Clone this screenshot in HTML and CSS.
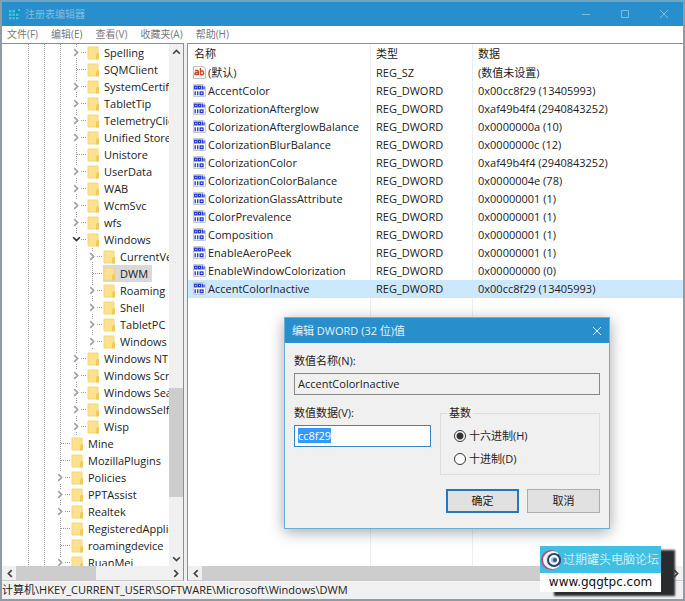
FILE: index.html
```html
<!DOCTYPE html>
<html lang="zh-CN">
<head>
  <meta charset="UTF-8" />
  <meta name="viewport" content="width=device-width, initial-scale=1" />
  <title>注册表编辑器</title>
  <link rel="stylesheet" href="styles.css">
</head>
<body>
  <svg class="defs" aria-hidden="true">
    <symbol id="folder" viewBox="0 0 12 14">
      <path d="M1 1h10v12H1z" fill="#fde28c" stroke="#f3d67c"/>
      <path d="M10 7h2v6.500h-3V9z" fill="#f0cb5c"/>
    </symbol>
    <symbol id="arrow" viewBox="0 0 8 8">
      <path d="M2 1l3 3-3 3" fill="none" stroke="currentColor" stroke-width="1.500"/>
    </symbol>
    <symbol id="dword" viewBox="0 0 13 13">
      <path d="M.5 .5h9.500l2.500 2v10H.5z" fill="#f6f8fc" stroke="#c3c9d4"/>
      <g fill="none" stroke="#2338cf" stroke-width="1.300">
        <rect x="1.700" y="2.200" width="2.300" height="2.600"/>
        <rect x="5.500" y="2.200" width="2" height="2.600"/>
        <path d="M9.300 1.500v4M11 2.500v3M2.200 7.300v4M4.700 7.300v4"/>
        <rect x="7.200" y="8" width="2.800" height="2.600"/>
      </g>
    </symbol>
    <symbol id="string" viewBox="0 0 13 13">
      <path d="M.5 .5h9.500l2.500 2v10H.5z" fill="#fdf7f4" stroke="#c5c1bf"/>
      <g fill="none" stroke="#d4472a" stroke-width="1.400">
        <path d="M2 4.500h2.500L5.300 5.300V9M5.300 6.500H3L2 7.400V8.500h3.300"/>
        <path d="M7.500 2v7M7.500 5h2l1 1v2l-1 .8h-2"/>
      </g>
    </symbol>
  </svg>

  <header class="titlebar">
    <svg class="app-icon" viewBox="0 0 13 13">
      <path d="M1 2h10v10H1z" fill="#168fc0"/>
      <path d="M1 2h2.500v2.500H1zM4.500 2H7v2.500H4.500zM1 5.500h2.500V8H1zM4.500 5.500H7V8H4.500zM8 5.500h2.500V8H8zM1 9h2.500v2.500H1zM4.500 9H7v2.500H4.500zM8 9h2.500v2.500H8zM10 1h2v2h-2z" fill="#43c0e4"/>
    </svg>
    <h1>注册表编辑器</h1>
    <button class="win-btn" aria-label="最小化"><svg viewBox="0 0 10 10"><path d="M1 5.500h8"/></svg></button>
    <button class="win-btn" aria-label="最大化"><svg viewBox="0 0 10 10"><path d="M1.500 1.500h7v7h-7z"/></svg></button>
    <button class="win-btn" aria-label="关闭"><svg viewBox="0 0 10 10"><path d="M1 1l8 8M9 1l-8 8"/></svg></button>
  </header>

  <nav class="menu">
    <a href="#">文件(F)</a>
    <a href="#">编辑(E)</a>
    <a href="#">查看(V)</a>
    <a href="#">收藏夹(A)</a>
    <a href="#">帮助(H)</a>
  </nav>

  <main class="panes">
    <div class="pane tree-pane">
      <div class="tree-view">
        <ul class="tree" id="tree"></ul>
      </div>
      <div class="scroll vertical">
        <button aria-label="向上"><svg class="up"><use href="#arrow"/></svg></button>
        <div class="track"><div class="thumb"></div></div>
        <button aria-label="向下"><svg class="down"><use href="#arrow"/></svg></button>
      </div>
      <div class="scroll horizontal">
        <button aria-label="向左"><svg class="left"><use href="#arrow"/></svg></button>
        <div class="track"><div class="thumb"></div></div>
        <button aria-label="向右"><svg><use href="#arrow"/></svg></button>
      </div>
    </div>

    <div class="pane value-pane">
      <div class="value-view">
        <table>
          <thead>
            <tr><th class="col-name">名称</th><th class="col-type">类型</th><th>数据</th></tr>
          </thead>
          <tbody id="values"></tbody>
        </table>
      </div>
      <div class="scroll horizontal">
        <button aria-label="向左"><svg class="left"><use href="#arrow"/></svg></button>
        <div class="track"><div class="thumb"></div></div>
        <button aria-label="向右"><svg><use href="#arrow"/></svg></button>
      </div>
    </div>
  </main>

  <footer class="status">计算机\HKEY_CURRENT_USER\SOFTWARE\Microsoft\Windows\DWM</footer>

  <form class="dialog" role="dialog" aria-labelledby="dialogTitle">
    <div class="dialog-title">
      <h2 id="dialogTitle">编辑 DWORD (32 位)值</h2>
      <button type="button" class="close" aria-label="关闭"><svg viewBox="0 0 10 10"><path d="M1 1l8 8M9 1l-8 8"/></svg></button>
    </div>
    <div class="dialog-body">
      <div class="field">
        <label for="valueName">数值名称(N):</label>
        <input type="text" id="valueName" class="readonly" value="AccentColorInactive" readonly>
      </div>
      <div class="dialog-row">
        <div class="field data-field">
          <label for="valueData">数值数据(V):</label>
          <input type="text" id="valueData" value="cc8f29">
        </div>
        <fieldset>
          <legend>基数</legend>
          <label><input type="radio" name="base" checked>十六进制(H)</label>
          <label><input type="radio" name="base">十进制(D)</label>
        </fieldset>
      </div>
      <div class="actions">
        <button type="button" class="default">确定</button>
        <button type="button">取消</button>
      </div>
    </div>
  </form>

  <aside class="badge">
    <div class="badge-name">
      <svg viewBox="0 0 22 22">
        <circle cx="10" cy="11" r="9" fill="#dfe9f2" stroke="#a8557c" stroke-width="2"/>
        <path d="M17 5a8 8 0 1 0 1 11" fill="none" stroke="#f7f4f6" stroke-width="2"/>
        <circle cx="13" cy="11" r="7" fill="#24476c"/>
        <circle cx="13" cy="11" r="4" fill="#9cc5dd" stroke="#fff" stroke-width="2"/>
        <circle cx="14" cy="11" r="2" fill="#2b5981"/>
      </svg>
      过期罐头电脑论坛
    </div>
    <div class="badge-url">www.gqgtpc.com</div>
  </aside>

  <script>
    // [name, state] - state: 1 = collapsed, 0 = no children, array = expanded
    const keys = [
      ["", [
        ["Spelling", 1], ["SQMClient", 0], ["SystemCertifi", 1], ["TabletTip", 1],
        ["TelemetryClie", 1], ["Unified Store", 1], ["Unistore", 0], ["UserData", 1],
        ["WAB", 1], ["WcmSvc", 1], ["wfs", 1],
        ["Windows", [
          ["CurrentVe", 1], ["DWM", 0], ["Roaming", 1], ["Shell", 1],
          ["TabletPC", 1], ["Windows", 1]
        ]],
        ["Windows NT", 1], ["Windows Scr", 1], ["Windows Sea", 1],
        ["WindowsSelfH", 1], ["Wisp", 1]
      ]],
      ["Mine", 0], ["MozillaPlugins", 0], ["Policies", 1], ["PPTAssist", 1],
      ["Realtek", 1], ["RegisteredApplic", 0], ["roamingdevice", 0], ["RuanMei", 1]
    ];

    const values = [
      ["(默认)", "REG_SZ", "(数值未设置)"],
      ["AccentColor", "REG_DWORD", "0x00cc8f29 (13405993)"],
      ["ColorizationAfterglow", "REG_DWORD", "0xaf49b4f4 (2940843252)"],
      ["ColorizationAfterglowBalance", "REG_DWORD", "0x0000000a (10)"],
      ["ColorizationBlurBalance", "REG_DWORD", "0x0000000c (12)"],
      ["ColorizationColor", "REG_DWORD", "0xaf49b4f4 (2940843252)"],
      ["ColorizationColorBalance", "REG_DWORD", "0x0000004e (78)"],
      ["ColorizationGlassAttribute", "REG_DWORD", "0x00000001 (1)"],
      ["ColorPrevalence", "REG_DWORD", "0x00000001 (1)"],
      ["Composition", "REG_DWORD", "0x00000001 (1)"],
      ["EnableAeroPeek", "REG_DWORD", "0x00000001 (1)"],
      ["EnableWindowColorization", "REG_DWORD", "0x00000000 (0)"],
      ["AccentColorInactive", "REG_DWORD", "0x00cc8f29 (13405993)"]
    ];

    function renderKeys(list) {
      return list.map(([name, state]) => {
        const open = Array.isArray(state);
        let html = "";
        if (name) {
          const arrow = state ? `<svg class="${open ? "down" : ""}"><use href="#arrow"/></svg>` : "";
          html += `<div class="key ${name === "DWM" ? "current" : ""}">
            <span class="expander">${arrow}</span>
            <span class="key-name"><svg class="folder"><use href="#folder"/></svg>${name}</span>
          </div>`;
        }
        if (open) html += `<ul>${renderKeys(state)}</ul>`;
        return `<li>${html}</li>`;
      }).join("");
    }

    document.getElementById("tree").innerHTML = renderKeys(keys);

    document.getElementById("values").innerHTML = values.map(([name, type, data]) => `
      <tr class="${name === "AccentColorInactive" ? "selected" : ""}">
        <td><svg class="value-icon"><use href="#${type === "REG_SZ" ? "string" : "dword"}"/></svg>${name}</td>
        <td>${type}</td>
        <td>${data}</td>
      </tr>`).join("");

    document.getElementById("valueData").select();
  </script>
</body>
</html>
```
FILE: styles.css
```css
* {
  box-sizing: border-box;
}
body {
  margin: 0;
  min-height: 100vh;
  display: flex;
  flex-direction: column;
  border: 2px solid #909ba3;
  border-top-color: #70a5c2;
  background: #f0f0f0;
  color: #222;
  font-family: "Open Sans", "Noto Sans CJK SC", sans-serif;
  font-size: 11px;
  line-height: 16px;
}
button,
input {
  font: inherit;
  color: inherit;
}
ul {
  list-style: none;
  margin: 0;
  padding: 0;
}
.defs {
  position: absolute;
  width: 0;
  height: 0;
}

.titlebar {
  display: flex;
  align-items: center;
  height: 24px;
  padding-left: 6px;
  background: #288fcc;
  color: #80bcdf;
}
.titlebar h1 {
  flex: 1;
  margin: 0 0 0 4px;
  font-size: 10px;
  font-weight: normal;
}
.app-icon {
  width: 13px;
  height: 13px;
}
.win-btn,
.close {
  display: grid;
  place-items: center;
  width: 39px;
  height: 24px;
  padding: 0;
  border: 0;
  background: none;
}
.win-btn svg,
.close svg {
  width: 10px;
  height: 10px;
  fill: none;
  stroke: currentColor;
}

.menu {
  display: flex;
  gap: 13px;
  height: 17px;
  padding-left: 5px;
  background: #fff;
}
.menu a {
  color: #777;
  font-size: 10px;
  text-decoration: none;
}

.panes {
  flex: 1;
  display: flex;
  gap: 3px;
}
.pane {
  display: grid;
  grid-template-rows: 1fr 14px;
  border: 1px solid #8b8e94;
  border-bottom-color: #c8c8c8;
  background: #fff;
}
.tree-pane {
  width: 182px;
  grid-template-columns: 1fr 14px;
  border-left: 0;
}
.tree-pane .horizontal {
  grid-column: 1 / 3;
}
.value-pane {
  flex: 1;
  border-right: 0;
}

/* registry keys, each guide line is one dotted background */
.tree-view {
  height: 0;
  min-height: 100%;
  overflow: hidden;
}
.tree,
.tree ul {
  background-image: repeating-linear-gradient(#999 0 1px, #fff 1px 2px);
  background-repeat: no-repeat;
  background-size: 1px 100%;
}
.tree {
  padding-left: 50px;
  background-image:
    repeating-linear-gradient(#999 0 1px, #fff 1px 2px),
    repeating-linear-gradient(#999 0 1px, #fff 1px 2px),
    repeating-linear-gradient(#999 0 1px, #fff 1px 2px);
  background-position: 26px 0, 42px 0, 58px 0;
}
.tree ul {
  padding-left: 16px;
  background-position: 24px 0;
}
.key {
  display: flex;
  height: 17px;
  white-space: nowrap;
}
.expander {
  flex: none;
  display: flex;
  align-items: center;
  width: 19px;
  padding-left: 4px;
  background: repeating-linear-gradient(90deg, #999 0 1px, transparent 1px 2px) 9px 8px / 9px 1px no-repeat;
}
.expander svg {
  width: 9px;
  height: 11px;
  background: #fff;
  color: #a0a0a0;
}
.expander .down {
  width: 11px;
  height: 9px;
  margin-left: -1px;
  color: #333;
}
.key-name {
  display: flex;
  align-items: center;
  gap: 5px;
  padding-right: 4px;
}
.current .key-name {
  background: #d9d9d9;
}
.folder {
  width: 12px;
  height: 14px;
}

.scroll {
  display: flex;
  background: #f0f0f0;
}
.scroll button {
  display: grid;
  place-items: center;
  width: 14px;
  height: 14px;
  padding: 0;
  border: 0;
  background: none;
  color: #444;
}
.scroll svg {
  width: 9px;
  height: 9px;
}
.up {
  transform: rotate(-90deg);
}
.down {
  transform: rotate(90deg);
}
.left {
  transform: rotate(180deg);
}
.track {
  flex: 1;
  display: flex;
}
.thumb {
  background: #cdcdcd;
}
.vertical,
.vertical .track {
  flex-direction: column;
}
.vertical .thumb {
  height: 22%;
  margin-top: auto;
  margin-bottom: 55px;
}
.tree-pane .horizontal .thumb {
  width: 52%;
}
.value-pane .horizontal .thumb {
  width: 99%;
}

.value-view {
  background:
    linear-gradient(#eee, #eee) 182px 0 / 1px 100% no-repeat,
    linear-gradient(#eee, #eee) 284px 0 / 1px 100% no-repeat;
}
.value-view table {
  width: 100%;
  table-layout: fixed;
  border-collapse: collapse;
}
.value-view th,
.value-view td {
  height: 18px;
  padding: 0 0 0 6px;
  line-height: 16px;
  font-weight: normal;
  text-align: left;
  white-space: nowrap;
}
.value-view th {
  height: 20px;
}
.col-name {
  width: 182px;
}
.col-type {
  width: 102px;
}
.value-view td:first-child {
  padding-left: 5px;
}
.value-icon {
  width: 13px;
  height: 13px;
  margin-right: 2px;
  vertical-align: -2px;
}
.selected {
  background: #cce8ff;
}

.status {
  height: 18px;
  border-top: 1px solid #f8f8f8;
}

.dialog {
  position: absolute;
  left: 284px;
  top: 317px;
  width: 326px;
  border: 1px solid #69b0d8;
  background: #f0f0f0;
  box-shadow: 0 3px 14px rgba(0, 0, 0, 0.35);
}
.dialog-title {
  display: flex;
  align-items: center;
  height: 25px;
  padding-left: 7px;
  background: #288fcc;
  color: #e4f3fb;
}
.dialog-title h2 {
  flex: 1;
  margin: 0;
  font-size: 11px;
  font-weight: normal;
}
.close {
  width: 25px;
}
.dialog-body {
  padding: 10px 9px 15px;
}
.field {
  display: flex;
  flex-direction: column;
  gap: 4px;
}
.field input {
  width: 100%;
  height: 22px;
  padding: 0 3px 2px;
  border: 1px solid #3a84c4;
  outline: 0;
  background: #fff;
}
.field .readonly {
  border-color: #888;
  background: #f0f0f0;
}
input::selection {
  background: #3399ff;
  color: #fff;
}
.dialog-row {
  display: flex;
  justify-content: space-between;
  margin-top: 10px;
}
.data-field {
  width: 137px;
}
fieldset {
  width: 160px;
  height: 70px;
  margin: 0;
  padding: 3px 13px;
  border: 1px solid #dcdcdc;
}
legend {
  margin-left: -7px;
  padding: 0 2px;
}
fieldset label {
  display: flex;
  align-items: center;
  gap: 3px;
  height: 23px;
}
fieldset input {
  appearance: none;
  width: 12px;
  height: 12px;
  margin: 0;
  border: 1px solid #333;
  border-radius: 50%;
  background: #fff;
}
fieldset input:checked {
  background: radial-gradient(#333 0 3px, #fff 4px);
}
.actions {
  display: flex;
  justify-content: flex-end;
  gap: 8px;
  margin-top: 14px;
}
.actions button {
  width: 73px;
  height: 24px;
  padding: 0;
  border: 1px solid #adadad;
  background: #e1e1e1;
}
.actions .default {
  border: 2px solid #2378bd;
}

.badge {
  position: absolute;
  right: 24px;
  bottom: 9px;
  width: 121px;
  box-shadow: 14px 4px 2px #292b2d;
}
.badge-name {
  display: flex;
  align-items: center;
  height: 27px;
  padding-left: 1px;
  background: #3fbfe2;
  color: #fff;
  font-size: 12px;
  font-weight: 300;
  white-space: nowrap;
}
.badge-name svg {
  flex: none;
  width: 22px;
  height: 22px;
}
.badge-url {
  height: 19px;
  background: #fff;
  color: #111;
  font-family: "DejaVu Sans", sans-serif;
  font-size: 12px;
  line-height: 18px;
  text-align: center;
}
```
